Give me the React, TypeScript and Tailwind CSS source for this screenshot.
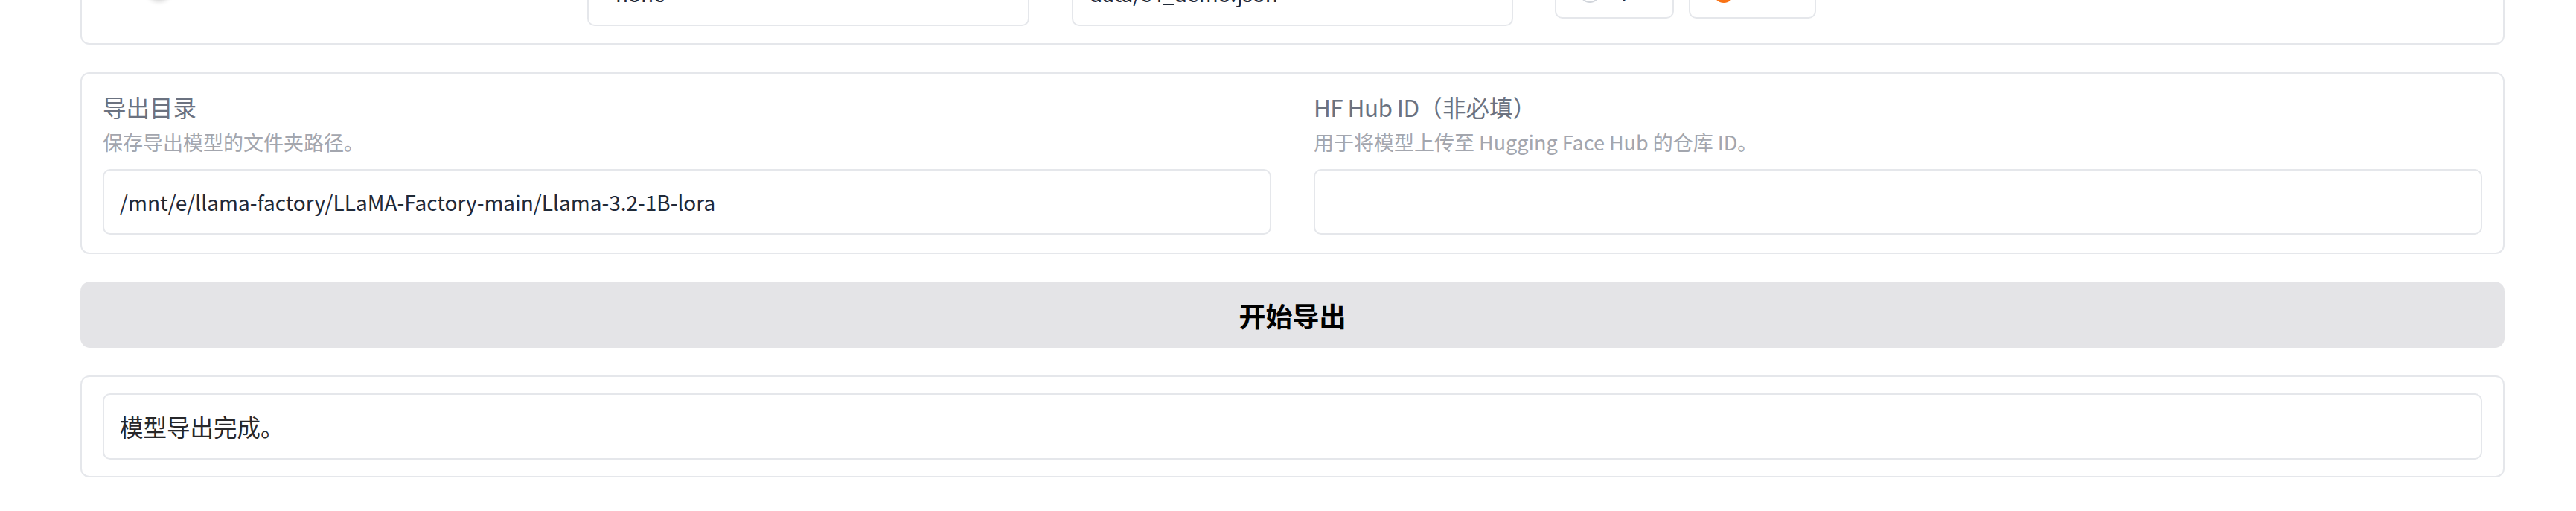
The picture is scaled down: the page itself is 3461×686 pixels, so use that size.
import React from "react";

const font = "font-['Noto_Sans_CJK_SC','Noto_Sans',sans-serif]";

function Field({
  label,
  info,
  value,
}: {
  label: React.ReactNode;
  info: string;
  value: string;
}) {
  return (
    <div className="flex flex-col min-w-0">
      <span className="text-[31.5px] leading-[47px] text-[#6b7280]">{label}</span>
      <span className="mt-[4px] text-[27px] leading-[40px] text-[#a3a6ae]">{info}</span>
      <div className="mt-[16px] h-[88px] border-2 border-[#e5e7eb] rounded-[10px] bg-white pl-[21px] pr-[21px] flex items-center text-[28px] text-[#1f2937] whitespace-nowrap overflow-hidden">
        {value}
      </div>
    </div>
  );
}

export default function App() {
  return (
    <div className={`${font} min-h-screen bg-white pl-[108px] pr-[96px] flex flex-col gap-[37px]`}>
      {/* top panel (scrolled off) */}
      <div className="-mt-[140px] h-[200px] border-2 border-[#e5e7eb] rounded-[12px] bg-white flex items-end">
        <div className="w-[679px] shrink-0 pl-[87px] mb-[58px]">
          <div className="w-[33px] h-[33px] rounded-full bg-white shadow-[0_2px_6px_rgba(0,0,0,0.18)]" />
        </div>
        <div className="w-[594px] shrink-0 h-[88px] mb-[23px] border-2 border-[#e5e7eb] rounded-[10px] bg-white pl-[36px] flex items-center text-[28px] text-[#1f2937]">
          none
        </div>
        <div className="ml-[57px] w-[593px] shrink-0 h-[88px] mb-[23px] border-2 border-[#e5e7eb] rounded-[10px] bg-white pl-[22px] flex items-center text-[28px] text-[#1f2937]">
          data/c4_demo.json
        </div>
        <div className="ml-[56px] w-[160px] shrink-0 h-[70px] mb-[33px] border-2 border-[#e5e7eb] rounded-[10px] bg-white pl-[31px] flex items-center gap-[14px] text-[28px] text-[#1f2937]">
          <span className="w-[28px] h-[28px] rounded-full border-2 border-[#d1d5db] bg-white shrink-0" />
          <span className="mb-[14px]">cpu</span>
        </div>
        <div className="ml-[20px] w-[171px] shrink-0 h-[70px] mb-[33px] border-2 border-[#e5e7eb] rounded-[10px] bg-white pl-[31px] flex items-center gap-[14px] text-[28px] text-[#1f2937]">
          <span className="w-[28px] h-[28px] rounded-full bg-[#f97316] shrink-0 flex items-center justify-center">
            <span className="w-[10px] h-[10px] rounded-full bg-white" />
          </span>
          <span className="mb-[14px]">auto</span>
        </div>
      </div>

      {/* export dir panel */}
      <div className="border-2 border-[#e5e7eb] rounded-[12px] bg-white px-[28px] pt-[21px] pb-[24px]">
        <div className="grid grid-cols-2 gap-x-[57px]">
          <Field
            label="导出目录"
            info="保存导出模型的文件夹路径。"
            value="/mnt/e/llama-factory/LLaMA-Factory-main/Llama-3.2-1B-lora"
          />
          <Field
            label={
              <>
                <span className="tracking-[-0.6px]">HF Hub ID</span>（非必填）
              </>
            }
            info="用于将模型上传至 Hugging Face Hub 的仓库 ID。"
            value=""
          />
        </div>
      </div>

      {/* button */}
      <button className="h-[89px] rounded-[13px] bg-[#e4e4e7] text-[36px] font-bold text-black flex items-center justify-center">
        开始导出
      </button>

      {/* output */}
      <div className="border-2 border-[#e5e7eb] rounded-[12px] bg-white px-[28px] py-[22px]">
        <div className="h-[89px] border-2 border-[#e5e7eb] rounded-[10px] bg-white px-[21px] flex items-center text-[31.5px] text-[#27272a]">
          模型导出完成。
        </div>
      </div>
    </div>
  );
}
